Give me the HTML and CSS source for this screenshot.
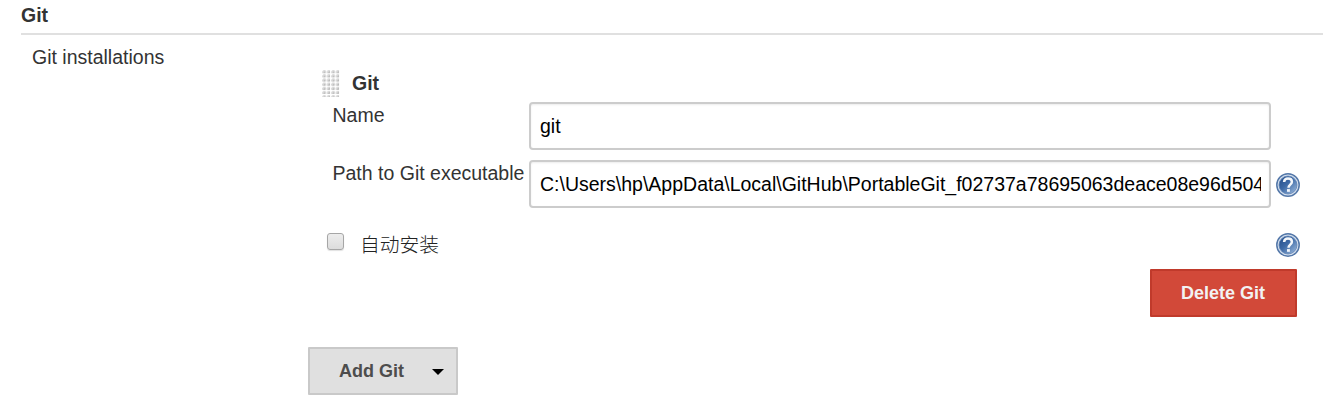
FILE: index.html
```html
<!DOCTYPE html>
<html lang="zh-CN">
<head>
<meta charset="utf-8">
<title>Git</title>
<link rel="stylesheet" href="styles.css">
</head>
<body>
<svg class="defs" width="0" height="0" aria-hidden="true">
  <defs>
    <linearGradient id="blue" x1="0" y1="0" x2="1" y2="1">
      <stop offset="0" stop-color="#204a87"/><stop offset=".45" stop-color="#3e6aa6"/><stop offset="1" stop-color="#a3bfe0"/>
    </linearGradient>
    <symbol id="help" viewBox="0 0 24 24">
      <circle cx="12" cy="12" r="11.200" fill="#d5e0ee" stroke="#5478a9" stroke-width="1.500"/>
      <circle cx="12" cy="12" r="9" fill="url(#blue)" stroke="#5f83b4" stroke-width=".8"/>
      <path d="M8.100 9C8.300 6.400 9.900 5.500 12 5.500c2.300 0 3.900 1.100 3.900 3.200 0 2.900-3.400 2.900-3.400 6" fill="none" stroke="#f3f6fa" stroke-width="2.500"/>
      <rect x="11" y="16.100" width="2.900" height="2.700" fill="#f3f6fa"/>
    </symbol>
    <pattern id="dots" width="4.500" height="4.150" patternUnits="userSpaceOnUse">
      <path d="M0 3.200V1.600L1.600 0h1.900v3.200z" fill="#dadada"/>
      <path d="M1 3.200L3.500.9v2.300z" fill="#b4b4b4"/>
    </pattern>
  </defs>
</svg>
<main class="config">
  <h2 class="section-title">Git</h2>
  <div class="section-body">
    <div class="section-label">Git installations</div>
    <div class="installations">
      <div class="tool-header">
        <svg class="drag-handle" width="18" height="27"><rect width="18" height="27" fill="url(#dots)"/></svg>
        <b>Git</b>
      </div>
      <div class="field">
        <label class="field-label" for="name">Name</label>
        <input class="text-input" id="name" type="text" value="git">
      </div>
      <div class="field">
        <label class="field-label" for="path">Path to Git executable</label>
        <input class="text-input" id="path" type="text" value="C:\Users\hp\AppData\Local\GitHub\PortableGit_f02737a78695063deace08e96d504">
        <svg class="help" width="24" height="24"><use href="#help"/></svg>
      </div>
      <div class="auto-install">
        <input class="checkbox" id="auto" type="checkbox">
        <label class="auto-label" for="auto">自动安装</label>
        <svg class="help" width="24" height="24"><use href="#help"/></svg>
      </div>
      <div class="delete-row"><button class="button danger">Delete Git</button></div>
      <button class="button add">Add Git<svg class="caret" width="12" height="6"><path d="M0 0h12L6 6z"/></svg></button>
    </div>
  </div>
</main>
</body>
</html>
```
FILE: styles.css
```css
* { box-sizing: border-box; }
body {
  margin: 0;
  background: #fff;
  color: #333;
  font-family: "Liberation Sans", "Noto Sans CJK SC", sans-serif;
  font-size: 19.500px;
  line-height: 24px;
  overflow: hidden;
}
.defs { display: block; height: 0; }
.config { padding: 3px 10px 0 21px; }
.section-title {
  height: 32px;
  margin: 0;
  border-bottom: 2px solid #e0e0e0;
  font-size: 19.500px;
  line-height: 24px;
}
.section-body { display: flex; }
.section-label { width: 287px; padding: 10px 0 0 11px; }
.installations { width: 992px; padding-top: 35px; }
.tool-header { display: flex; height: 32px; padding-left: 14px; gap: 12px; }
.tool-header b { padding-top: 1px; }
.drag-handle { display: block; }
.field { display: flex; height: 48px; margin-bottom: 10px; padding-left: 24.500px; }
.field-label { width: 196.500px; padding-top: 1px; white-space: nowrap; }
.text-input {
  width: 742px;
  height: 48px;
  padding: 0 8px 0 9px;
  border: 2px solid #ccc;
  border-radius: 4px;
  box-shadow: inset 0 1px 2px rgba(0, 0, 0, .075);
  background: #fff;
  color: #000;
  font: inherit;
}
.help { display: block; flex: none; }
.field .help { margin: 13px 0 0 5px; }
.auto-install { display: flex; height: 24px; margin-top: 25px; padding-left: 19px; }
.checkbox {
  appearance: none;
  width: 17px;
  height: 17px;
  margin: 0;
  border: 1px solid #a6a6a6;
  border-radius: 3px;
  background: linear-gradient(#ededed, #dcdcdc);
  box-shadow: 0 1px 1px rgba(0, 0, 0, .12);
}
.auto-label {
  margin-left: 16px;
  color: #222;
  font-family: "Noto Sans CJK SC", sans-serif;
  font-size: 19.800px;
  font-weight: 300;
  line-height: 22px;
}
.auto-install .help { margin-left: auto; }
.delete-row { display: flex; justify-content: flex-end; padding: 12px 3px 0 0; }
.button {
  display: flex;
  align-items: center;
  height: 48px;
  padding: 0 29px;
  border: 2px solid #c9c9c9;
  border-radius: 1px;
  background: #e0e0e0;
  color: #4d4d4d;
  font: bold 18px/24px "Liberation Sans", sans-serif;
}
.danger { width: 147px; border-color: #c03a2b; background: #d24939; color: #f2f2f2; }
.add { width: 150px; margin-top: 30px; padding-right: 12px; justify-content: space-between; }
.caret { display: block; margin-top: 2px; fill: #000; }
```
